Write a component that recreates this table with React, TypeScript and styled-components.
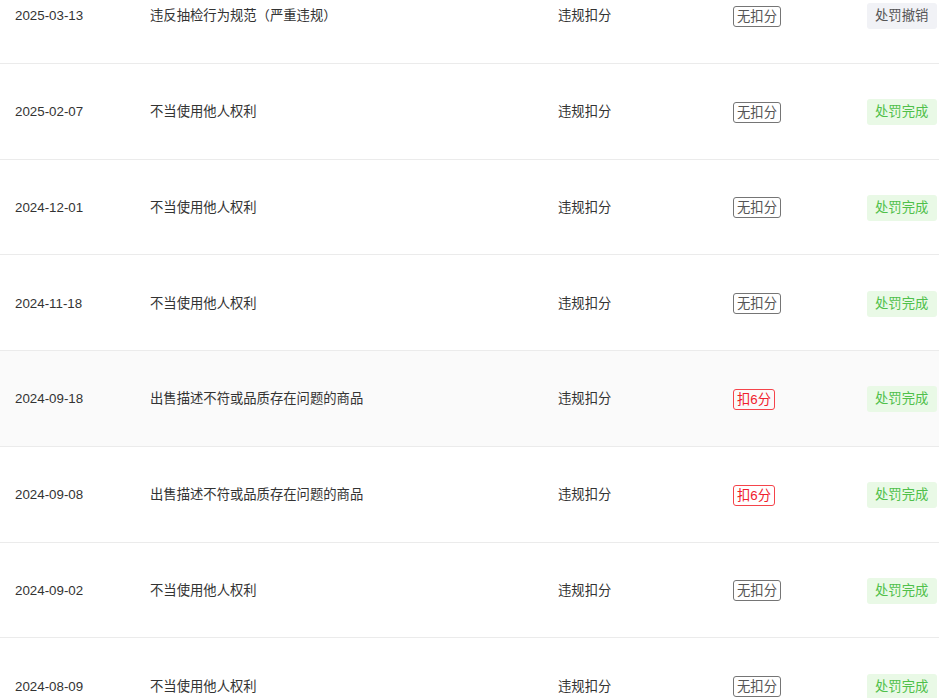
import React from 'react'
import styled, { createGlobalStyle } from 'styled-components'

const GlobalStyle = createGlobalStyle`
    html, body {
        margin: 0;
        padding: 0;
        background: #fff;
        overflow: hidden;
    }
    body {
        font-family: "Liberation Sans", "Noto Sans CJK SC", sans-serif;
        font-size: 13.33px;
        color: #333;
    }
`

const Table = styled.div`
    width: 939px;
    margin-top: -32px;
`

const Row = styled.div<{ $hover?: boolean }>`
    display: grid;
    grid-template-columns: 150px 408px 175px 134px 1fr;
    align-items: center;
    height: 95.75px;
    box-sizing: border-box;
    padding-top: 2px;
    border-bottom: 1px solid #ebebeb;
    background: ${(p) => (p.$hover ? '#fafafa' : '#fff')};
`

const Cell = styled.div<{ $pad?: number }>`
    padding-left: ${(p) => p.$pad || 0}px;
    white-space: nowrap;
    line-height: 20px;
`

const Tag = styled.span<{ $red?: boolean }>`
    display: inline-block;
    height: 21px;
    line-height: 19px;
    box-sizing: border-box;
    padding: 0 3px;
    border: 1px solid ${(p) => (p.$red ? '#f5444b' : '#757575')};
    border-radius: 3px;
    color: ${(p) => (p.$red ? '#f0202c' : '#555')};
    font-size: 13.33px;
`

const Status = styled.span<{ $done?: boolean }>`
    display: inline-block;
    height: 26px;
    line-height: 26px;
    padding: 0 9px 0 8px;
    border-radius: 3px;
    font-size: 13.33px;
    background: ${(p) => (p.$done ? '#e9f9e6' : '#f1f2f6')};
    color: ${(p) => (p.$done ? '#4fc04a' : '#555')};
`

interface Record {
    date: string
    reason: string
    score: number
    done: boolean
    hover?: boolean
}

const records: Record[] = [
    { date: '2025-03-13', reason: '违反抽检行为规范（严重违规）', score: 0, done: false },
    { date: '2025-02-07', reason: '不当使用他人权利', score: 0, done: true },
    { date: '2024-12-01', reason: '不当使用他人权利', score: 0, done: true },
    { date: '2024-11-18', reason: '不当使用他人权利', score: 0, done: true },
    { date: '2024-09-18', reason: '出售描述不符或品质存在问题的商品', score: 6, done: true, hover: true },
    { date: '2024-09-08', reason: '出售描述不符或品质存在问题的商品', score: 6, done: true },
    { date: '2024-09-02', reason: '不当使用他人权利', score: 0, done: true },
    { date: '2024-08-09', reason: '不当使用他人权利', score: 0, done: true },
]

const App: React.FC = () => {
    return (
        <>
            <GlobalStyle />
            <Table>
                {records.map((r, i) => (
                    <Row key={i} $hover={r.hover}>
                        <Cell $pad={15}>{r.date}</Cell>
                        <Cell>{r.reason}</Cell>
                        <Cell>违规扣分</Cell>
                        <Cell>
                            {r.score > 0 ? <Tag $red>扣{r.score}分</Tag> : <Tag>无扣分</Tag>}
                        </Cell>
                        <Cell>
                            <Status $done={r.done}>{r.done ? '处罚完成' : '处罚撤销'}</Status>
                        </Cell>
                    </Row>
                ))}
            </Table>
        </>
    )
}

export default App
